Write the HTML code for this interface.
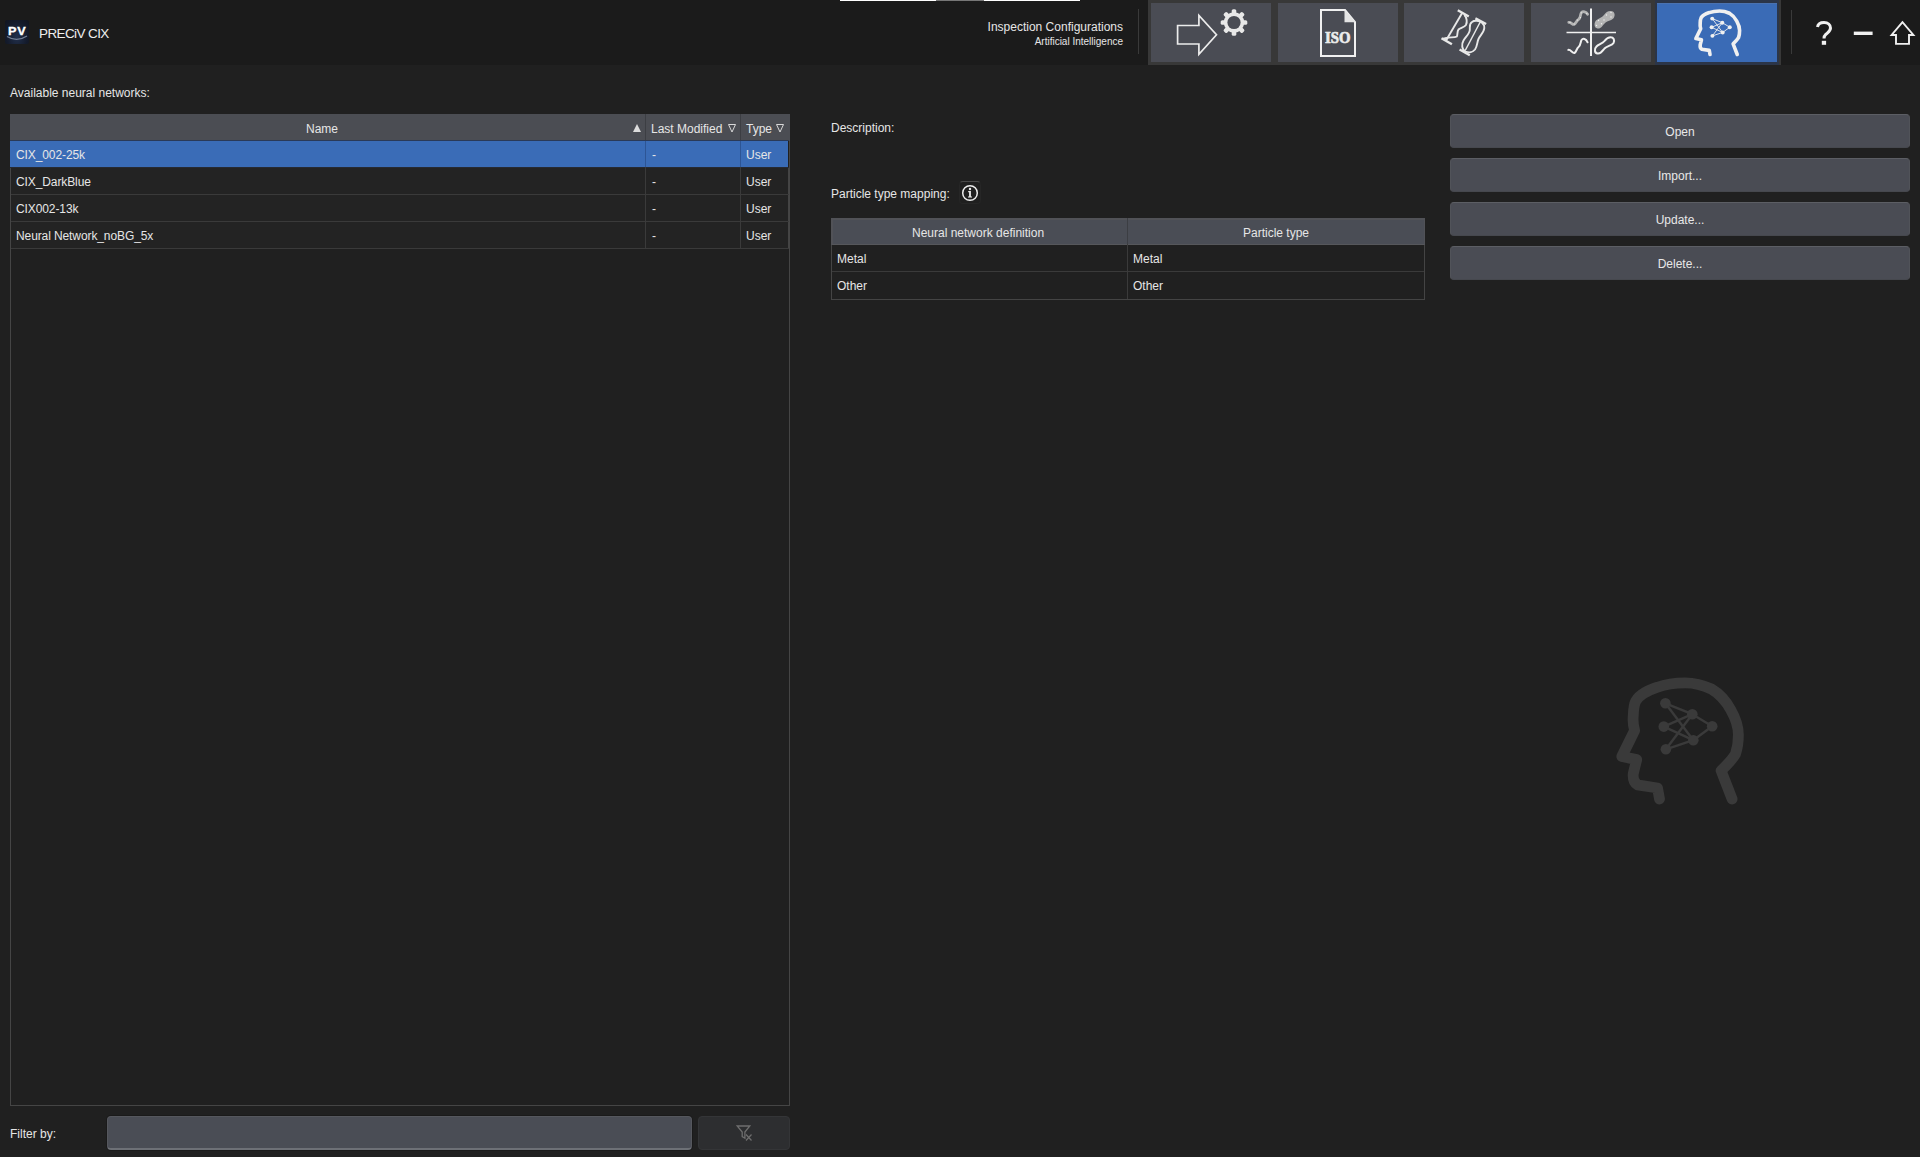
<!DOCTYPE html>
<html><head><meta charset="utf-8">
<style>
*{box-sizing:border-box;margin:0;padding:0}
html,body{width:1920px;height:1157px;overflow:hidden;background:#202020;font-family:"Liberation Sans",sans-serif;color:#e6e6e6}
.a{position:absolute;white-space:nowrap}
.t12{font-size:12px;line-height:14px}
#top{position:absolute;left:0;top:0;width:1920px;height:65px;background:#1b1b1b}
.tab{position:absolute;top:3px;height:59px;width:120px;background:#4a4c54}
.row{position:absolute;left:11px;width:778px;height:27px;border-bottom:1px solid #3a3a3a}
.btn{position:absolute;left:1450px;width:460px;height:34px;background:#4a4c54;border-radius:4px;border:1px solid #515359;border-top-color:#5c5e64;border-bottom-color:#46484e;text-align:center;font-size:12px;line-height:34px;color:#e8e8e8}
</style></head><body>
<div id="top">
  <div class="a" style="left:840px;top:0;width:96px;height:1px;background:#fff"></div>
  <div class="a" style="left:936px;top:0;width:48px;height:1px;background:#777"></div>
  <div class="a" style="left:984px;top:0;width:96px;height:1px;background:#fff"></div>
  <div class="a" style="left:5px;top:20px;width:24px;height:24px;background:radial-gradient(ellipse at 50% 70%,#22304c 0%,#141b2c 60%,#10141e 100%);border-radius:2px"></div>
  <div class="a" style="left:8px;top:25px;font:bold 11px/12px 'Liberation Sans';letter-spacing:0.6px;color:#fff;-webkit-text-stroke:0.3px #fff;transform:scaleX(1.15);transform-origin:0 0">PV</div>
  <div class="a" style="left:39px;top:26px;font-size:13.5px;line-height:15px;letter-spacing:-0.6px;color:#eee">PRECiV CIX</div>
  <div class="a" style="right:797px;top:20px;font-size:12px;line-height:14px;color:#e6e6e6">Inspection Configurations</div>
  <div class="a" style="right:797px;top:36px;font-size:10px;line-height:11px;color:#e6e6e6">Artificial Intelligence</div>
  <div class="a" style="left:1138px;top:9px;width:1px;height:45px;background:#3a3a3a"></div>
  <div class="a" style="left:1148px;top:0;width:633px;height:65px;background:#383838"></div>
  <div class="tab" style="left:1151px"></div>
  <div class="tab" style="left:1278px"></div>
  <div class="tab" style="left:1404px"></div>
  <div class="tab" style="left:1531px"></div>
  <div class="a" style="left:1655px;top:0;width:124px;height:65px;background:#2b3548"></div>
  <div class="tab" style="left:1657px;width:120px;background:#3a6bb6;border-top:1px solid #4a72b0"></div>
  <div class="a" style="left:1791px;top:10px;width:1px;height:44px;background:#3a3a3a"></div>
</div>
<svg class="a" style="left:0;top:0" width="1920" height="65" viewBox="0 0 1920 65">
  <defs>
    <path id="head" d="M49.5,129 L47.5,118 L27.5,114.8 C23.5,112.5 22.8,108 23.3,103.4 L26.7,89.6 L11.8,86.5 L24.6,60.5 C23,55 22.8,50 23.3,45.3 C23.5,39 23.8,35 25.8,31 C30,24 38,20.5 47.5,17.2 C56,14 65,12.8 75.1,12.8 C85,12.8 93,15 101.4,19 C110,24 116,31 120.8,39.8 C126,49 128.4,57 128.4,64.7 C128.4,72 127.5,78 125.5,84 C122,90 117,95 111.1,100.6 L122.1,129"/>
    <g id="net">
      <g stroke-width="2.4">
        <line x1="55.4" y1="33.3" x2="82.3" y2="44.2"/><line x1="55.4" y1="33.3" x2="83.3" y2="70.2"/>
        <line x1="53.8" y1="56.6" x2="82.3" y2="44.2"/><line x1="53.8" y1="56.6" x2="83.3" y2="70.2"/>
        <line x1="55.9" y1="79.3" x2="82.3" y2="44.2"/><line x1="55.9" y1="79.3" x2="83.3" y2="70.2"/>
        <line x1="82.3" y1="44.2" x2="102.2" y2="56.3"/><line x1="83.3" y1="70.2" x2="102.2" y2="56.3"/>
      </g>
      <g stroke="none">
        <circle cx="55.4" cy="33.3" r="5.3"/><circle cx="82.3" cy="44.2" r="5.3"/><circle cx="53.8" cy="56.6" r="5.3"/>
        <circle cx="102.2" cy="56.3" r="5.3"/><circle cx="83.3" cy="70.2" r="5.3"/><circle cx="55.9" cy="79.3" r="5.3"/>
      </g>
    </g>
  </defs>
  <!-- logo -->
  <path d="M7,36.5 Q17,42.5 27,36" stroke="#8a96ad" stroke-width="1.3" fill="none" opacity="0.8"/>
  <!-- tab1 arrow + gear -->
  <path d="M1177.6,25.5 H1198.9 V15.5 L1216.5,34.8 L1198.9,54.2 V44 H1177.6 Z" fill="none" stroke="#ececec" stroke-width="1.7" stroke-linejoin="miter"/>
  <g fill="#e8e8e8" transform="translate(1234,22.5)">
    <circle r="10.2"/>
    <rect x="-2.3" y="-13.3" width="4.6" height="26.6" rx="1.6"/>
    <rect x="-2.3" y="-13.3" width="4.6" height="26.6" rx="1.6" transform="rotate(45)"/>
    <rect x="-2.3" y="-13.3" width="4.6" height="26.6" rx="1.6" transform="rotate(90)"/>
    <rect x="-2.3" y="-13.3" width="4.6" height="26.6" rx="1.6" transform="rotate(135)"/>
    <circle r="6.6" fill="#4a4c54"/>
  </g>
  <!-- tab2 ISO -->
  <path d="M1321,10 H1345 L1355,22 V56 H1321 Z" fill="none" stroke="#f0f0f0" stroke-width="2"/>
  <path d="M1344.5,9.5 L1355.5,22.3 H1344.5 Z" fill="#e4e4e4"/>
  <text x="1325" y="42.5" font-family="Liberation Serif" font-weight="bold" font-size="16" fill="#ececec" stroke="#ececec" stroke-width="0.7" textLength="25.5" lengthAdjust="spacingAndGlyphs">ISO</text>
  <!-- tab3 calipers -->
  <g fill="none" stroke="#e8e8e8" stroke-width="1.9" stroke-linecap="butt">
    <line x1="1457.8" y1="10.3" x2="1468.8" y2="16.5" stroke-width="2.4"/>
    <line x1="1441.5" y1="38.3" x2="1451.9" y2="44.3" stroke-width="2.4"/>
    <line x1="1462" y1="13.2" x2="1446.3" y2="40"/>
    <path d="M1464.3,14.9 C1466.8,17.5 1467.5,22 1465.9,25 C1464.5,27.2 1460,28 1458.5,29.5 C1457,31 1457.8,35 1456.8,36.5 C1455,37.8 1451,37.2 1448.4,37.6 L1443,38.8"/>
    <circle cx="1445.8" cy="39" r="0.9" stroke-width="1.3"/>
    <line x1="1475.4" y1="18.4" x2="1486.1" y2="24" stroke-width="2.4"/>
    <line x1="1459.6" y1="49.5" x2="1469.8" y2="55.3" stroke-width="2.4"/>
    <line x1="1480.5" y1="21.5" x2="1465.2" y2="50.5" stroke-width="1.5"/>
    <path d="M1476,20.8 C1481,20.5 1484.5,24 1484.3,28 C1484,32.5 1480,35.5 1478.5,39 C1477,42 1477.5,46 1475,49.5 C1473,52 1469,53 1465.5,51.5 C1461.5,49.5 1461.5,44 1463.5,40.5 C1465.5,37 1469.5,34 1469.8,30 C1470,26.5 1469,24 1472,22 C1473,21.2 1474.5,20.8 1476,20.8 Z"/>
  </g>
  <!-- tab4 quadrants -->
  <line x1="1591" y1="8.5" x2="1591" y2="56" stroke="#f0f0f0" stroke-width="2"/>
  <line x1="1566.5" y1="32.5" x2="1616" y2="32.5" stroke="#f0f0f0" stroke-width="1.5"/>
  <path d="M1568.8,22.4 C1571,21.8 1572.5,25 1574,24.4 C1576,23.5 1576.5,20.5 1578.5,19.5 C1581,18 1580,14 1581.5,12.5 C1583,11 1586,11.5 1587.6,14.2" fill="none" stroke="#b4b4b4" stroke-width="2.8" stroke-linecap="round"/>
  <g fill="#eeeeee"><circle cx="1570" cy="22.4" r="0.6"/><circle cx="1574.2" cy="24" r="0.6"/><circle cx="1577.5" cy="20" r="0.6"/><circle cx="1580.5" cy="17.5" r="0.6"/><circle cx="1581.3" cy="12.8" r="0.6"/><circle cx="1586.8" cy="13.5" r="0.6"/></g>
  <path d="M1568.3,49.9 C1570.5,49.2 1572.5,53.5 1574.4,53 C1576.5,52 1576.5,48.5 1578.5,47 C1581,45 1580.5,41.5 1581.5,40 C1583,38 1586,38.5 1587.6,42.3" fill="none" stroke="#f0f0f0" stroke-width="2" stroke-linecap="round"/>
  <path d="M1610.6,37.2 C1613.5,37.2 1615,40 1613.5,43 C1612,45.5 1607,46 1604.5,48.5 C1602.5,51 1601,54 1597.5,53.5 C1594.5,53 1594,49 1596.5,46.5 C1598.5,44.5 1602.5,43.5 1604.5,41 C1606.5,38.5 1607.5,37.2 1610.6,37.2 Z" fill="none" stroke="#f0f0f0" stroke-width="2"/>
  <path d="M1610.6,11 C1614.5,11 1615.5,14.5 1614,17.5 C1612.5,20.5 1607.5,20.5 1605,23 C1602.5,25.5 1601,29 1597.5,28.5 C1594,28 1593.8,23 1596,20.5 C1598,18.5 1602,17.5 1604,15 C1606,12.5 1607.5,11 1610.6,11 Z" fill="#b4b4b4"/>
  <g fill="#eeeeee"><circle cx="1611" cy="12.5" r="0.7"/><circle cx="1606.5" cy="15" r="0.7"/><circle cx="1611" cy="17" r="0.7"/><circle cx="1604" cy="20" r="0.7"/><circle cx="1598.5" cy="20.5" r="0.7"/><circle cx="1601.5" cy="23.8" r="0.7"/><circle cx="1596.5" cy="25.5" r="0.7"/></g>
  <!-- tab5 head -->
  <g transform="translate(1691.45,6.125) scale(0.375)" fill="#f0f0f0" stroke="#f0f0f0" fill-opacity="1">
    <use href="#head" fill="none" stroke-width="9.6" stroke-linecap="round" stroke-linejoin="round"/>
    <use href="#net"/>
  </g>
  <!-- right icons -->
  <path d="M1817.5,27 C1818,24 1820.5,22.6 1824,22.6 C1828,22.6 1830.5,25 1830.5,28 C1830.5,31 1828,32.3 1826,34.2 C1824.5,35.6 1824,36.5 1824,38.5" fill="none" stroke="#f0f0f0" stroke-width="3"/>
  <rect x="1821.8" y="40.8" width="4.3" height="4" fill="#f0f0f0"/>
  <rect x="1853.8" y="31.6" width="18.8" height="3.4" fill="#f0f0f0"/>
  <path d="M1902.5,22.2 L1891.6,35 H1896 V43.9 H1909 V35 H1913.4 Z" fill="none" stroke="#f0f0f0" stroke-width="1.9" stroke-linejoin="miter"/>
</svg>

<div class="a t12" style="left:10px;top:86px">Available neural networks:</div>
<!-- table -->
<div class="a" style="left:10px;top:114px;width:780px;height:992px;border:1px solid #454545;border-top:none"></div>
<div class="a" style="left:10px;top:114px;width:780px;height:27px;background:#4b4d53"></div>
<div class="a" style="left:11px;top:168px;width:777px;height:80px;background:#232323"></div>
<div class="a" style="left:788px;top:168px;width:1px;height:81px;background:#444"></div>
<div class="a" style="left:10px;top:140px;width:779px;height:1px;background:#2a3a58"></div>
<div class="a" style="left:10px;top:167px;width:779px;height:1px;background:#262a32"></div>
<div class="a" style="left:10px;top:141px;width:778px;height:26px;background:#3a6cb7"></div>
<div class="a" style="left:11px;top:194px;width:778px;height:1px;background:#3a3a3a"></div>
<div class="a" style="left:11px;top:221px;width:778px;height:1px;background:#3a3a3a"></div>
<div class="a" style="left:11px;top:248px;width:778px;height:1px;background:#3a3a3a"></div>
<div class="a" style="left:645px;top:114px;width:1px;height:26px;background:#3c3e43"></div>
<div class="a" style="left:740px;top:114px;width:1px;height:26px;background:#3c3e43"></div>
<div class="a" style="left:645px;top:141px;width:1px;height:26px;background:#2d5595"></div>
<div class="a" style="left:740px;top:141px;width:1px;height:26px;background:#2d5595"></div>
<div class="a" style="left:645px;top:167px;width:1px;height:81px;background:#3a3a3a"></div>
<div class="a" style="left:740px;top:167px;width:1px;height:81px;background:#3a3a3a"></div>
<div class="a t12" style="left:306px;top:122px">Name</div>
<div class="a" style="left:633px;top:124px;width:0;height:0;border-left:4.5px solid transparent;border-right:4.5px solid transparent;border-bottom:8px solid #dcdcdc"></div>
<div class="a t12" style="left:651px;top:122px">Last Modified</div>
<div class="a t12" style="left:746px;top:122px">Type</div>
<svg class="a" style="left:0;top:100px" width="800" height="50" viewBox="0 100 800 50">
  <path d="M728.5,124.5 H735.5 L732,132 Z" fill="none" stroke="#d8d8d8" stroke-width="1"/>
  <path d="M776.5,124.5 H783.5 L780,132 Z" fill="none" stroke="#d8d8d8" stroke-width="1"/>
</svg>
<div class="a t12" style="left:16px;top:148px;letter-spacing:-0.1px">CIX_002-25k</div>
<div class="a t12" style="left:16px;top:175px;letter-spacing:-0.1px">CIX_DarkBlue</div>
<div class="a t12" style="left:16px;top:202px;letter-spacing:-0.1px">CIX002-13k</div>
<div class="a t12" style="left:16px;top:229px;letter-spacing:-0.1px">Neural Network_noBG_5x</div>
<div class="a t12" style="left:652px;top:148px">-</div>
<div class="a t12" style="left:652px;top:175px">-</div>
<div class="a t12" style="left:652px;top:202px">-</div>
<div class="a t12" style="left:652px;top:229px">-</div>
<div class="a t12" style="left:746px;top:148px">User</div>
<div class="a t12" style="left:746px;top:175px">User</div>
<div class="a t12" style="left:746px;top:202px">User</div>
<div class="a t12" style="left:746px;top:229px">User</div>

<div class="a t12" style="left:10px;top:1127px">Filter by:</div>
<div class="a" style="left:107px;top:1116px;width:585px;height:34px;background:#4a4d55;border-radius:4px;border:1px solid #55575d;border-bottom:2px solid #6d7076;box-shadow:0 0 0 1px #1a1a1a"></div>
<div class="a" style="left:698px;top:1116px;width:92px;height:34px;background:#2d2e30;border-radius:4px;border:1px solid #343537"></div>

<div class="a t12" style="left:831px;top:121px">Description:</div>
<div class="a t12" style="left:831px;top:187px">Particle type mapping:</div>
<div class="a" style="left:831px;top:218px;width:594px;height:82px;border:1px solid #444"></div>
<div class="a" style="left:831px;top:218px;width:594px;height:27px;background:#4a4d55;border:2px solid #515257;border-bottom:1px solid #56575b;border-right-width:1px"></div>
<div class="a" style="left:832px;top:271px;width:592px;height:1px;background:#3a3a3a"></div>
<div class="a" style="left:1127px;top:218px;width:1px;height:26px;background:#3c3e43"></div>
<div class="a" style="left:1127px;top:244px;width:1px;height:55px;background:#3a3a3a"></div>
<div class="a t12" style="left:912px;top:226px">Neural network definition</div>
<div class="a t12" style="left:1243px;top:226px">Particle type</div>
<div class="a t12" style="left:837px;top:252px">Metal</div>
<div class="a t12" style="left:837px;top:279px">Other</div>
<div class="a t12" style="left:1133px;top:252px">Metal</div>
<div class="a t12" style="left:1133px;top:279px">Other</div>

<svg class="a" style="left:1610px;top:670px" width="140" height="140" viewBox="0 0 140 140">
  <use href="#head" fill="none" stroke="#3a3a3a" stroke-width="10.8" stroke-linecap="round" stroke-linejoin="round"/>
  <g fill="#3a3a3a" stroke="#3a3a3a"><use href="#net"/></g>
</svg>
<div class="a" style="left:959px;top:181px;width:22px;height:23px;background:#1f1f1f;border:1px solid #262626;border-top-color:#4a4a4a;border-radius:4px"></div>
<svg class="a" style="left:950px;top:175px" width="40" height="35" viewBox="950 175 40 35">
  <circle cx="970" cy="193" r="7.3" fill="none" stroke="#ececec" stroke-width="1.5"/>
  <circle cx="970" cy="189" r="1.2" fill="#ececec"/>
  <path d="M968.2,191 H970.9 V196.4 H972 V197.6 H968 V196.4 H969.1 V192.2 H968.2 Z" fill="#ececec"/>
</svg>
<svg class="a" style="left:730px;top:1120px" width="30" height="25" viewBox="730 1120 30 25">
  <path d="M737.2,1126 H749.8 L744.9,1132 V1138.2 L742.2,1136.6 V1132 Z" fill="none" stroke="#6e6e6e" stroke-width="1.3" stroke-linejoin="miter"/>
  <path d="M746,1134.5 L751.5,1140.5 M751.5,1134.5 L746,1140.5" stroke="#6e6e6e" stroke-width="1.2"/>
</svg>
<div class="btn" style="top:114px">Open</div>
<div class="btn" style="top:158px">Import...</div>
<div class="btn" style="top:202px">Update...</div>
<div class="btn" style="top:246px">Delete...</div>
</body></html>
